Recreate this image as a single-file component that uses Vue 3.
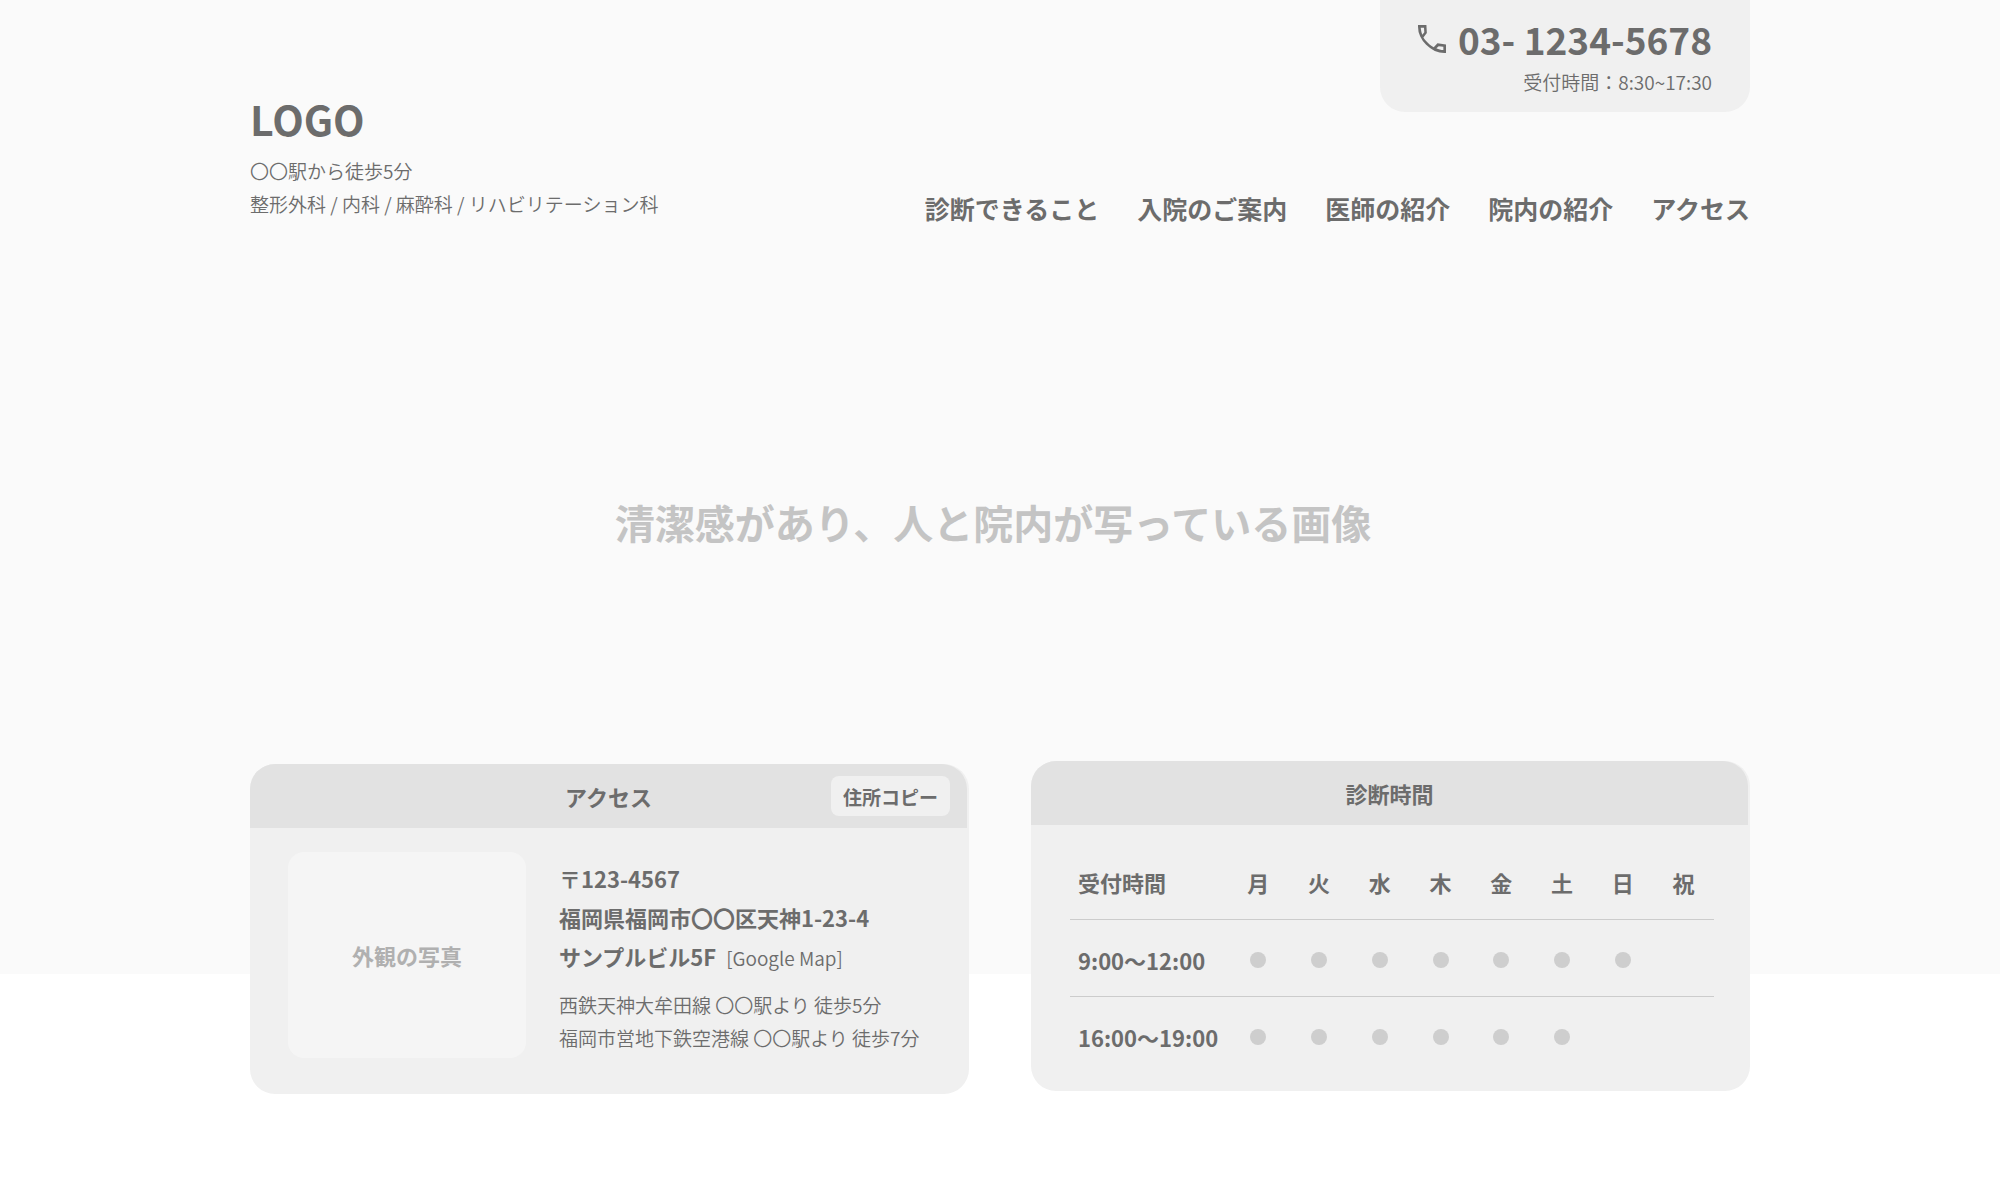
<script setup>
const navItems = ['診断できること', '入院のご案内', '医師の紹介', '院内の紹介', 'アクセス']
const days = ['月', '火', '水', '木', '金', '土', '日', '祝']
const hours = [
  { time: '9:00〜12:00', open: [true, true, true, true, true, true, true, false] },
  { time: '16:00〜19:00', open: [true, true, true, true, true, true, false, false] },
]
const address = '福岡県福岡市〇〇区天神1-23-4 サンプルビル5F'

function copyAddress() {
  navigator.clipboard?.writeText(address)
}
</script>

<template>
  <div class="page">
    <div class="hero">
      <header class="container site-header">
        <div class="brand">
          <h1 class="logo">LOGO</h1>
          <p class="small">〇〇駅から徒歩5分</p>
          <p class="small">整形外科 / 内科 / 麻酔科 / リハビリテーション科</p>
        </div>
        <div class="header-side">
          <div class="phone-card">
            <a class="phone" href="tel:0312345678">
              <svg class="phone-icon" viewBox="3 3 18 18" aria-hidden="true">
                <path fill-rule="evenodd" d="M21 21H19.95q-3.125 0-6.175-1.362t-5.55-3.863-3.862-5.55T3 4.05V3H8.4L8.7 8.2L6.475 11q.6 1 1.287 1.862t1.713 1.763q.775.775 1.625 1.438T13.1 17.3l2.4-2.5L21 15.6zM5.8 9.3L7.05 7.7L6.85 4.7H4.75q.125 1.225.35 2.325T5.8 9.3M14.8 18q1.075.475 2.188.775T19.3 19.15v-2.1l-3-.4z" />
              </svg>
              <span>03- 1234-5678</span>
            </a>
            <p class="small">受付時間：8:30~17:30</p>
          </div>
          <nav class="nav" aria-label="メイン">
            <a v-for="item in navItems" :key="item" href="#">{{ item }}</a>
          </nav>
        </div>
      </header>
      <p class="hero-text">清潔感があり、人と院内が写っている画像</p>
    </div>

    <main class="container cards">
      <section class="card">
        <div class="card-head">
          <h2>アクセス</h2>
          <button type="button" class="copy" @click="copyAddress">住所コピー</button>
        </div>
        <div class="access">
          <div class="photo">外観の写真</div>
          <div class="access-text">
            <address>
              〒123-4567<br>
              福岡県福岡市〇〇区天神1-23-4<br>
              サンプルビル5F<a class="map" href="#">[Google Map]</a>
            </address>
            <p class="small">西鉄天神大牟田線 〇〇駅より 徒歩5分</p>
            <p class="small">福岡市営地下鉄空港線 〇〇駅より 徒歩7分</p>
          </div>
        </div>
      </section>

      <section class="card card-hours">
        <div class="card-head">
          <h2>診断時間</h2>
        </div>
        <div class="hours">
          <table>
            <thead>
              <tr>
                <th scope="col" class="time">受付時間</th>
                <th v-for="day in days" :key="day" scope="col">{{ day }}</th>
              </tr>
            </thead>
            <tbody>
              <tr v-for="row in hours" :key="row.time">
                <th scope="row" class="time">{{ row.time }}</th>
                <td v-for="(open, i) in row.open" :key="i">
                  <span v-if="open" class="dot" role="img" aria-label="診療"></span>
                </td>
              </tr>
            </tbody>
          </table>
        </div>
      </section>
    </main>
  </div>
</template>

<style>
body {
  background: #ffffff;
}
</style>

<style scoped>
.page {
  font-family: "Noto Sans CJK JP", sans-serif;
  color: #6c6c6c;
  font-size: 22px;
  padding-bottom: 96px;
}

h1,
h2,
p {
  margin: 0;
}

a {
  color: inherit;
  text-decoration: none;
}

.container {
  box-sizing: border-box;
  width: 75%;
  margin: 0 auto;
}

.small {
  font-size: 19px;
  font-weight: 350;
  line-height: 33px;
}

.hero {
  background: #fafafa;
  padding-bottom: 422px;
}

.site-header {
  display: flex;
  justify-content: space-between;
  align-items: flex-end;
}

.brand {
  padding-bottom: 8px;
}

.logo {
  font-size: 41px;
  line-height: 60px;
  font-weight: 700;
  margin-bottom: 6px;
}

.header-side {
  display: flex;
  flex-direction: column;
  align-items: flex-end;
}

.phone-card {
  box-sizing: border-box;
  width: 370px;
  height: 112px;
  padding: 13px 38px 0 0;
  border-radius: 0 0 25px 25px;
  background: #f0f0f0;
  text-align: right;
}

.phone {
  display: flex;
  justify-content: flex-end;
  align-items: center;
  gap: 12px;
  font-size: 37px;
  line-height: 52px;
  font-weight: 700;
}

.phone-icon {
  width: 28px;
  height: 28px;
  fill: currentColor;
}

.nav {
  display: flex;
  gap: 38px;
  margin-top: 76px;
  font-size: 25px;
  line-height: 40px;
  font-weight: 700;
}

.hero-text {
  margin-top: 264px;
  padding-right: 14px;
  text-align: center;
  font-size: 40px;
  line-height: 60px;
  font-weight: 700;
  color: #c4c4c4;
}

.cards {
  display: grid;
  grid-template-columns: 1fr 1fr;
  gap: 62px;
  align-items: start;
  margin-top: -210px;
}

.card {
  box-sizing: border-box;
  min-height: 330px;
  border-radius: 25px;
  background: #f0f0f0;
  overflow: hidden;
}

.card-hours {
  margin-top: -3px;
}

.card-head {
  display: grid;
  grid-template-columns: 1fr auto 1fr;
  align-items: center;
  height: 64px;
  margin-right: 2px;
  border-top-right-radius: 25px;
  background: #e2e2e2;
}

.card-head h2 {
  grid-column: 2;
  font-size: 22px;
  line-height: 32px;
  font-weight: 700;
}

.copy {
  justify-self: end;
  width: 119px;
  height: 40px;
  margin-right: 17px;
  padding: 0;
  border: 0;
  border-radius: 8px;
  background: #f0f0f0;
  color: inherit;
  font-family: inherit;
  font-size: 19px;
  font-weight: 700;
}

.access {
  display: flex;
  gap: 33px;
  padding: 24px 0 0 38px;
}

.photo {
  display: flex;
  align-items: center;
  justify-content: center;
  width: 238px;
  height: 206px;
  border-radius: 16px;
  background: #f5f5f5;
  color: #b0b0b0;
  font-weight: 700;
}

.access-text {
  padding-top: 7px;
}

address {
  margin-bottom: 11px;
  font-style: normal;
  font-weight: 700;
  line-height: 39px;
}

.map {
  margin-left: 10px;
  font-size: 19px;
  font-weight: 350;
}

.hours {
  padding: 21px 36px 0 39px;
}

table {
  width: 100%;
  table-layout: fixed;
  border-collapse: collapse;
}

th,
td {
  box-sizing: border-box;
  height: 77px;
  padding: 4px 0 0;
  border-bottom: 1px solid #cccccc;
  text-align: center;
  vertical-align: middle;
  font-weight: 700;
  white-space: nowrap;
}

thead th {
  height: 73px;
  padding: 0;
}

tbody tr:last-child > * {
  border-bottom: 0;
}

th.time {
  width: 158px;
  padding-left: 8px;
  text-align: left;
}

.dot {
  display: block;
  width: 16px;
  height: 16px;
  margin: 0 auto;
  border-radius: 50%;
  background: #cecece;
}
</style>
